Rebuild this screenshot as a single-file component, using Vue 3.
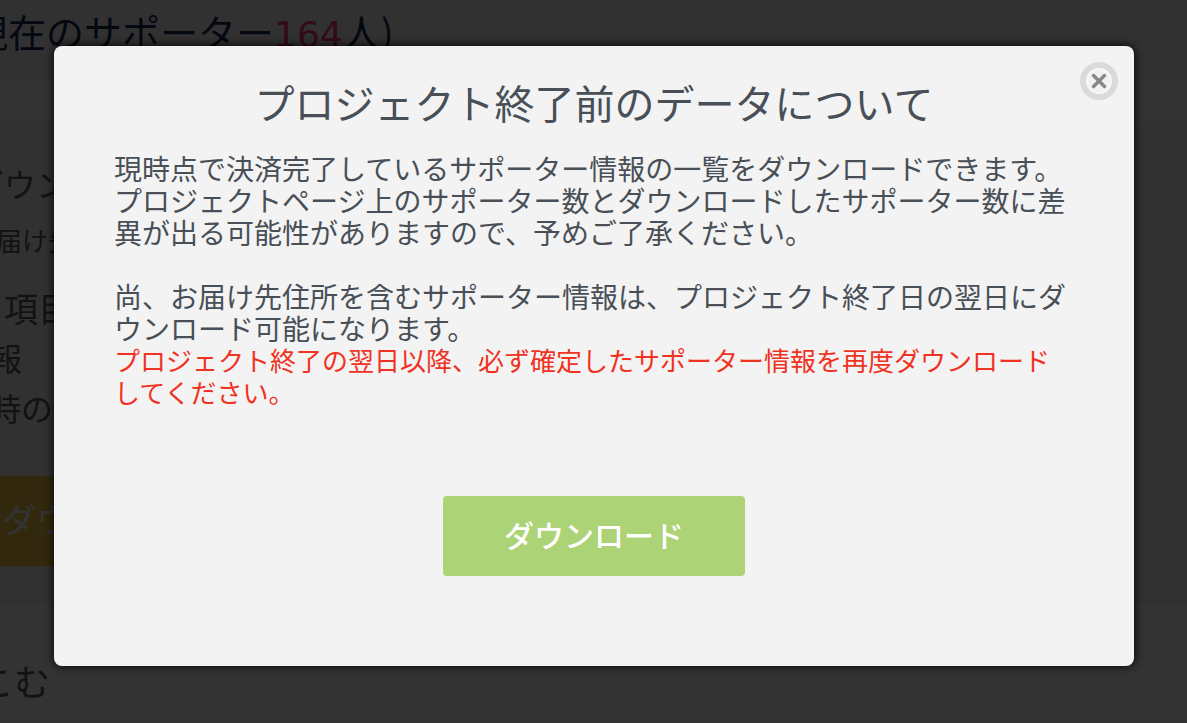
<script setup>
import { ref } from 'vue'

const open = ref(true)
const close = () => {
  open.value = false
}
</script>

<template>
  <div class="screen">
    <div class="page" :inert="open">
      <header class="page-header">
        <h1 class="supporters">現在のサポーター<span class="count">164</span>人)</h1>
      </header>
      <section class="panel">
        <h2 class="panel-title">ダウンロード</h2>
        <p class="panel-note">お届け先</p>
        <p class="panel-head">・項目</p>
        <p class="panel-item">情報</p>
        <p class="panel-item">同時の</p>
        <button class="page-button" type="button">ダウンロード</button>
      </section>
      <h2 class="narrow">しこむ</h2>
    </div>

    <div v-if="open" class="overlay">
      <div class="modal" role="dialog" aria-modal="true" aria-labelledby="modal-title">
        <button class="close" type="button" aria-label="閉じる" @click="close">
          <svg viewBox="0 0 38 38" aria-hidden="true">
            <circle cx="19" cy="19" r="16" fill="#f1f1f1" stroke="#dadada" stroke-width="6" />
            <circle cx="19" cy="19" r="12" fill="none" stroke="#f6f6f6" stroke-width="2" />
            <path d="M13.5 13.5 L24.5 24.5 M24.5 13.5 L13.5 24.5" stroke="#888" stroke-width="3.4" stroke-linecap="round" />
          </svg>
        </button>
        <h2 id="modal-title" class="title">プロジェクト終了前のデータについて</h2>
        <p class="text">
          現時点で決済完了しているサポーター情報の一覧をダウンロードできます。<br>プロジェクトページ上のサポーター数とダウンロードしたサポーター数に差異が出る可能性がありますので、予めご了承ください。
        </p>
        <p class="text second">
          尚、お届け先住所を含むサポーター情報は、プロジェクト終了日の翌日にダウンロード可能になります。
        </p>
        <p class="text warning">
          プロジェクト終了の翌日以降、必ず確定したサポーター情報を再度ダウンロードしてください。
        </p>
        <button class="download" type="button">ダウンロード</button>
      </div>
    </div>
  </div>
</template>

<style>
body {
  margin: 0;
  background: #fff;
}
</style>

<style scoped>
.screen {
  position: relative;
  min-height: 100vh;
  overflow: hidden;
  font-family: "Noto Sans CJK JP", sans-serif;
}

h1,
h2,
p {
  margin: 0;
  font-weight: 400;
}

button {
  border: 0;
  padding: 0;
  font-family: inherit;
  cursor: pointer;
}

.page {
  position: absolute;
  inset: 0;
  margin-left: -42px;
  color: #5a5a5a;
  white-space: nowrap;
}

.page-header {
  padding: 7px 12px 25px;
  background: #f5f5f5;
  border-bottom: 1px solid #eee;
}

.supporters {
  font-size: 38px;
  line-height: 48px;
  color: #182c50;
}

.count {
  font-family: "DejaVu Sans", sans-serif;
  font-size: 36px;
  line-height: 1;
  color: #ff3878;
}

.panel {
  margin-top: 41px;
  padding-bottom: 39px;
  background: #f5f5f5;
}

.panel-title {
  padding: 37px 0 0 14px;
  font-size: 32px;
  line-height: 48px;
}

.panel-note {
  padding: 13px 0 0 12px;
  font-size: 26px;
  line-height: 40px;
}

.panel-head {
  padding: 24px 0 0 12px;
  font-size: 34px;
  line-height: 48px;
}

.panel-item {
  font-size: 32px;
  line-height: 50px;
}

.panel-item + .panel-item {
  margin-left: -1px;
}

.page-button {
  display: block;
  width: 400px;
  height: 90px;
  margin-top: 44px;
  padding: 0 0 6px 44px;
  background: #f5c842;
  color: #fff;
  font-size: 34px;
  text-align: left;
}

.narrow {
  padding: 49px 0 0;
  margin-left: -16px;
  font-size: 36px;
  line-height: 52px;
}

.overlay {
  position: relative;
  box-sizing: border-box;
  min-height: 100vh;
  padding: 46px 53px 57px 54px;
  background: rgba(0, 0, 0, 0.8);
}

.modal {
  position: relative;
  display: flex;
  flex-direction: column;
  max-width: 960px;
  margin: 0 auto;
  padding: 28px 60px 90px;
  border-radius: 8px;
  background: #f3f3f3;
  box-shadow: 0 0 10px #000;
  color: #484f56;
}

.close {
  position: absolute;
  top: 16px;
  right: 16px;
  width: 38px;
  height: 38px;
  border-radius: 50%;
  background: none;
}

.close svg {
  display: block;
  width: 100%;
  height: 100%;
}

.title {
  margin-bottom: 22px;
  font-size: 40px;
  line-height: 56px;
  text-align: center;
}

.text {
  font-size: 28px;
  line-height: 32px;
}

.second {
  margin-top: 32px;
}

.warning {
  font-size: 26px;
  color: #f03223;
}

.download {
  align-self: center;
  width: 302px;
  height: 80px;
  margin-top: 88px;
  padding-bottom: 4px;
  border-radius: 4px;
  background: #acd376;
  color: #fff;
  font-size: 30px;
  font-weight: 500;
}
</style>
